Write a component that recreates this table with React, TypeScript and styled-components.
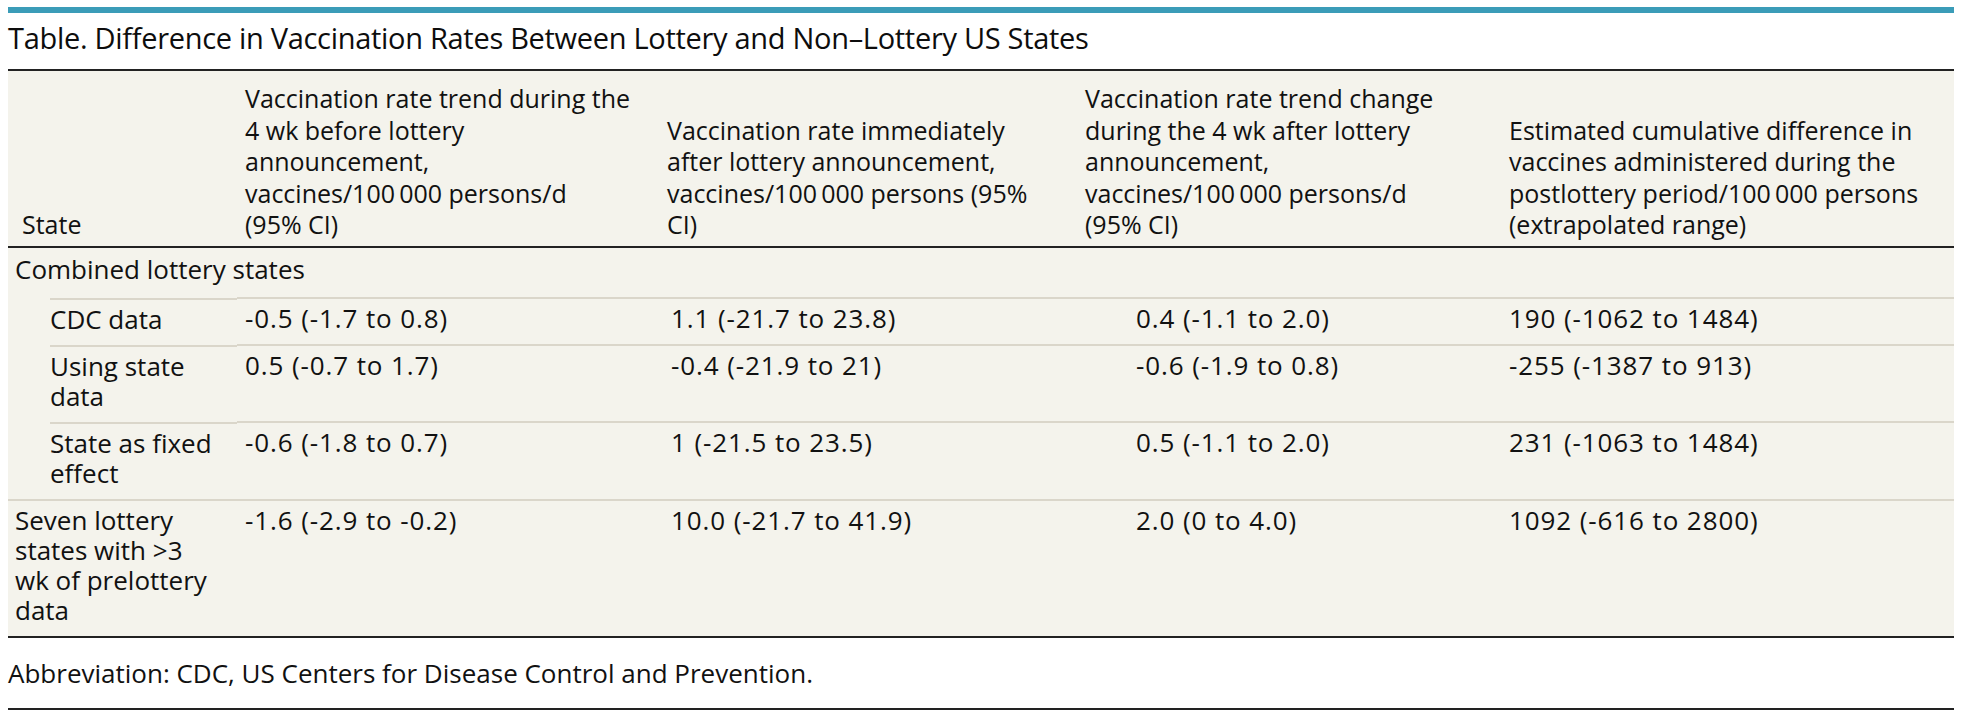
import React from "react";
import styled, { createGlobalStyle } from "styled-components";

const GlobalStyle = createGlobalStyle`
  html, body {
    margin: 0;
    padding: 0;
    background: #ffffff;
  }
  body {
    font-family: "Open Sans", "Noto Sans", sans-serif;
    color: #111;
  }
`;

const Page = styled.div`
  width: 1946px;
  padding: 7px 0 0 8px;
`;

const AccentBar = styled.div`
  height: 6px;
  background: #3b9cb8;
`;

const Caption = styled.h2`
  margin: 7px 0 13px;
  font-size: 29px;
  line-height: 36px;
  font-weight: 500;
  letter-spacing: -0.3px;
  color: #0d0d0d;
`;

const Table = styled.table`
  width: 100%;
  table-layout: fixed;
  border-collapse: collapse;
  background: #f4f3ec;
  border-top: 2px solid #222;
  border-bottom: 2px solid #222;
`;

const HeadCell = styled.th<{ $first?: boolean }>`
  text-align: left;
  vertical-align: bottom;
  font-size: 25px;
  font-weight: 400;
  line-height: 31.5px;
  white-space: nowrap;
  padding: 12px 8px 5px ${({ $first }) => ($first ? "14px" : "8px")};
  border-bottom: 2px solid #222;
`;

type Rule = "full" | "inset" | "none";

const ValueCell = styled.td<{ $indent?: number; $rule?: Rule }>`
  vertical-align: top;
  font-size: 26px;
  line-height: 30px;
  letter-spacing: 0.9px;
  white-space: nowrap;
  padding: 4px 8px 11px ${({ $indent = 8 }) => `${$indent}px`};
  border-top: ${({ $rule }) => ($rule === "none" ? "none" : "2px solid #dad6ca")};
`;

const StateCell = styled.td<{ $indent?: number; $rule?: Rule }>`
  vertical-align: top;
  font-size: 26px;
  line-height: 30px;
  white-space: nowrap;
  padding: ${({ $rule }) => ($rule === "full" ? "4px" : "6px")} 8px
    ${({ $rule }) => ($rule === "none" ? "13px" : "11px")}
    ${({ $indent = 7 }) => `${$indent}px`};
  border-top: ${({ $rule }) => ($rule === "full" ? "2px solid #dad6ca" : "none")};
  background: ${({ $rule }) =>
    $rule === "inset"
      ? "linear-gradient(#dad6ca, #dad6ca) no-repeat 42px 0 / 100% 2px"
      : "none"};
`;

const Footnote = styled.p`
  margin: 0;
  padding: 20px 0 19px;
  font-size: 26px;
  line-height: 31px;
  border-bottom: 2px solid #222;
`;

type Row = {
  state: string[];
  values: string[];
  indent: boolean;
  rule: Rule;
};

const headers: string[][] = [
  ["State"],
  [
    "Vaccination rate trend during the",
    "4 wk before lottery",
    "announcement,",
    "vaccines/100\u2009000 persons/d",
    "(95% CI)",
  ],
  [
    "Vaccination rate immediately",
    "after lottery announcement,",
    "vaccines/100\u2009000 persons (95%",
    "CI)",
  ],
  [
    "Vaccination rate trend change",
    "during the 4 wk after lottery",
    "announcement,",
    "vaccines/100\u2009000 persons/d",
    "(95% CI)",
  ],
  [
    "Estimated cumulative difference in",
    "vaccines administered during the",
    "postlottery period/100\u2009000 persons",
    "(extrapolated range)",
  ],
];

const rows: Row[] = [
  {
    state: ["CDC data"],
    values: ["-0.5 (-1.7 to 0.8)", "1.1 (-21.7 to 23.8)", "0.4 (-1.1 to 2.0)", "190 (-1062 to 1484)"],
    indent: true,
    rule: "inset",
  },
  {
    state: ["Using state", "data"],
    values: ["0.5 (-0.7 to 1.7)", "-0.4 (-21.9 to 21)", "-0.6 (-1.9 to 0.8)", "-255 (-1387 to 913)"],
    indent: true,
    rule: "inset",
  },
  {
    state: ["State as fixed", "effect"],
    values: ["-0.6 (-1.8 to 0.7)", "1 (-21.5 to 23.5)", "0.5 (-1.1 to 2.0)", "231 (-1063 to 1484)"],
    indent: true,
    rule: "inset",
  },
  {
    state: ["Seven lottery", "states with >3", "wk of prelottery", "data"],
    values: ["-1.6 (-2.9 to -0.2)", "10.0 (-21.7 to 41.9)", "2.0 (0 to 4.0)", "1092 (-616 to 2800)"],
    indent: false,
    rule: "full",
  },
];

const colWidths = [229, 422, 418, 424, 453];
// the third value column sits further right in the source
const valueIndent = [8, 12, 59, 8];

const Lines: React.FC<{ lines: string[] }> = ({ lines }) => (
  <>
    {lines.map((l, i) => (
      <React.Fragment key={i}>
        {i > 0 && <br />}
        {l}
      </React.Fragment>
    ))}
  </>
);

export default function App() {
  return (
    <>
      <GlobalStyle />
      <Page>
        <AccentBar />
        <Caption>
          Table. Difference in Vaccination Rates Between Lottery and Non–Lottery US States
        </Caption>
        <Table>
          <colgroup>
            {colWidths.map((w, i) => (
              <col key={i} style={{ width: w }} />
            ))}
          </colgroup>
          <thead>
            <tr>
              {headers.map((h, i) => (
                <HeadCell key={i} $first={i === 0}>
                  <Lines lines={h} />
                </HeadCell>
              ))}
            </tr>
          </thead>
          <tbody>
            <tr>
              <StateCell colSpan={5} $indent={7} $rule="none">
                Combined lottery states
              </StateCell>
            </tr>
            {rows.map((r, i) => (
              <tr key={i}>
                <StateCell $indent={r.indent ? 42 : 7} $rule={r.rule}>
                  <Lines lines={r.state} />
                </StateCell>
                {r.values.map((v, j) => (
                  <ValueCell key={j} $indent={valueIndent[j]} $rule={r.rule}>
                    {v}
                  </ValueCell>
                ))}
              </tr>
            ))}
          </tbody>
        </Table>
        <Footnote>Abbreviation: CDC, US Centers for Disease Control and Prevention.</Footnote>
      </Page>
    </>
  );
}
